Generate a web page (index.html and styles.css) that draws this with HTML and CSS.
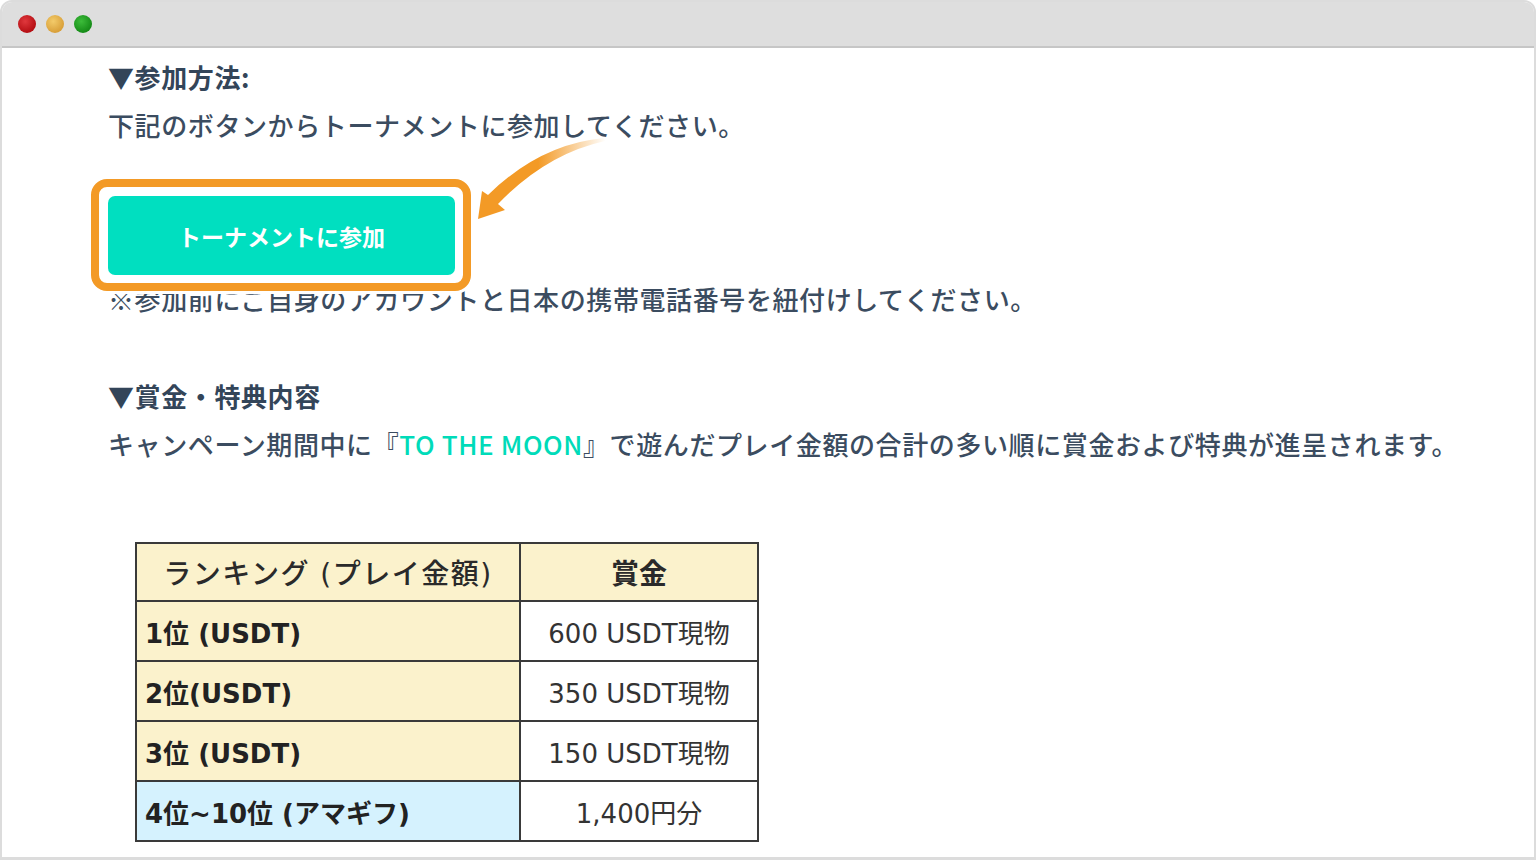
FILE: index.html
```html
<!DOCTYPE html>
<html lang="ja">
<head>
  <meta charset="UTF-8" />
  <meta name="viewport" content="width=device-width, initial-scale=1.0" />
  <title>トーナメント参加方法</title>
  <link rel="stylesheet" href="styles.css">
</head>
<body>
  <div class="window">
    <div class="titlebar">
      <span class="dot dot-red"></span>
      <span class="dot dot-yellow"></span>
      <span class="dot dot-green"></span>
    </div>

    <div class="content">
      <h3 class="heading">▼参加方法:</h3>
      <p class="text">下記のボタンからトーナメントに参加してください。</p>

      <div class="join">
        <a class="join-btn" href="#">トーナメントに参加</a>
        <span class="highlight"></span>
        <svg class="arrow" width="140" height="95" viewBox="0 0 140 95">
          <defs>
            <linearGradient id="arrowFade" gradientUnits="userSpaceOnUse" x1="0" y1="0" x2="136" y2="0">
              <stop offset="0" stop-color="#f39a26" />
              <stop offset="0.5" stop-color="#f39a26" />
              <stop offset="1" stop-color="#f39a26" stop-opacity="0" />
            </linearGradient>
          </defs>
          <path d="M134,8 Q70,14 18,65 L12,61 L8,89 L35,80 L28,74 Q76,24 135,11 Z" fill="url(#arrowFade)" />
        </svg>
      </div>

      <p class="text">※参加前にご自身のアカウントと日本の携帯電話番号を紐付けしてください。</p>

      <h3 class="heading section">▼賞金・特典内容</h3>
      <p class="text">キャンペーン期間中に『<span class="brand">TO THE MOON</span>』で遊んだプレイ金額の合計の多い順に賞金および特典が進呈されます。</p>

      <table class="prize">
        <thead>
          <tr>
            <th class="rank-head">ランキング (プレイ金額)</th>
            <th class="prize-head">賞金</th>
          </tr>
        </thead>
        <tbody>
          <tr>
            <td class="rank">1位 (USDT)</td>
            <td class="amount">600 USDT現物</td>
          </tr>
          <tr>
            <td class="rank">2位(USDT)</td>
            <td class="amount">350 USDT現物</td>
          </tr>
          <tr>
            <td class="rank">3位 (USDT)</td>
            <td class="amount">150 USDT現物</td>
          </tr>
          <tr>
            <td class="rank rank-gift">4位~10位 (アマギフ)</td>
            <td class="amount">1,400円分</td>
          </tr>
        </tbody>
      </table>
    </div>
  </div>
</body>
</html>
```

FILE: styles.css
```css
* {
  box-sizing: border-box;
}

body {
  margin: 0;
  background-color: #ffffff;
  font-family: "Noto Sans CJK JP", "Noto Sans", sans-serif;
}

.window {
  width: 1536px;
  height: 860px;
  border: 2px solid #dcdcdc;
  border-bottom-width: 3px;
  border-radius: 12px 12px 0 0;
  overflow: hidden;
  background-color: #ffffff;
}

.titlebar {
  height: 46px;
  background-color: #dedede;
  border-bottom: 2px solid #c6c6c6;
  display: flex;
  align-items: center;
  gap: 10px;
  padding: 0 0 0 16px;
}

.dot {
  width: 18px;
  height: 18px;
  border-radius: 50%;
}

.dot-red {
  background: radial-gradient(circle at 40% 35%, #e0383d, #b50f14 70%);
}

.dot-yellow {
  background: radial-gradient(circle at 40% 35%, #f3cb6a, #d9a03a 70%);
}

.dot-green {
  background: radial-gradient(circle at 40% 35%, #3cbc3a, #168c18 70%);
}

.content {
  padding: 5px 0 0 106px;
  color: #3b4c60;
}

.heading {
  margin: 0;
  font-size: 26px;
  line-height: 48px;
  font-weight: 700;
  letter-spacing: 0.6px;
  color: #334559;
}

.heading.section {
  margin-top: 49px;
}

.text {
  margin: 0;
  font-size: 26px;
  line-height: 48px;
  font-weight: 500;
  letter-spacing: 0.6px;
  white-space: nowrap;
}

.brand {
  color: #00dbb9;
}

.join {
  position: relative;
  width: 347px;
  height: 79px;
  margin-top: 47px;
}

.join-btn {
  display: flex;
  align-items: center;
  justify-content: center;
  width: 100%;
  height: 100%;
  border-radius: 7px;
  background-color: #00dfc0;
  color: #ffffff;
  font-size: 23px;
  font-weight: 700;
  text-decoration: none;
}

.highlight {
  position: absolute;
  top: -17px;
  left: -17px;
  width: 380px;
  height: 112px;
  border: 8px solid #f39a26;
  border-radius: 16px;
  box-shadow: 0 0 0 3px #ffffff;
  z-index: 1;
}

.arrow {
  position: absolute;
  left: 362px;
  top: -66px;
}

.prize {
  margin: 74px 0 0 27px;
  border-collapse: collapse;
  border: 2px solid #3a3a3a;
  font-family: "DejaVu Sans", "Noto Sans CJK JP", sans-serif;
  font-size: 26px;
  color: #222;
}

.prize th,
.prize td {
  border: 2px solid #3a3a3a;
  padding: 0 8px;
  white-space: nowrap;
}

.prize th {
  height: 58px;
  background-color: #fbf2cc;
  font-size: 28px;
  font-weight: 500;
  text-align: center;
  color: #2a2a2a;
}

.prize td {
  height: 60px;
}

.rank-head {
  width: 384px;
  letter-spacing: 1.5px;
}

.prize-head {
  width: 238px;
  font-weight: 700 !important;
}

.rank {
  background-color: #fbf2cc;
  font-weight: 700;
  text-align: left;
}

.rank-gift {
  background-color: #d5f2fe;
}

.amount {
  background-color: #ffffff;
  text-align: center;
  color: #333;
}
```
